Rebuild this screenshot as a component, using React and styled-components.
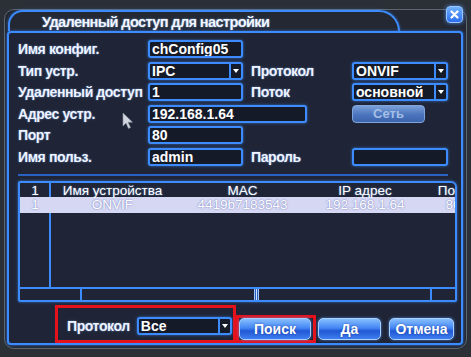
import React from "react";
import styled, { createGlobalStyle } from "styled-components";

const GlobalStyle = createGlobalStyle`
  html, body {
    margin: 0;
    padding: 0;
    background: #2b3036;
    font-family: "Liberation Sans", Arial, sans-serif;
  }
`;

const BLUE = "#3d8cff";

const Screen = styled.div`
  position: relative;
  width: 471px;
  height: 357px;
  overflow: hidden;
  padding: 9px 0 0 4px;
  box-sizing: border-box;
`;

const Window = styled.div`
  position: relative;
  width: 463px;
  box-sizing: border-box;
  border: 1px solid #5f6670;
  border-radius: 10px;
  padding: 0 3px 3px 2px;
  background: #232833;
`;

const TitleBar = styled.div`
  display: flex;
  height: 21px;
`;

const TitleTab = styled.div`
  width: 392px;
  margin-left: 1px;
  box-sizing: border-box;
  border: 2px solid ${BLUE};
  border-bottom: none;
  border-radius: 18px 26px 0 0;
  padding-left: 32px;
  display: flex;
  align-items: center;
  box-shadow: 0 0 3px rgba(60, 140, 255, 0.6);
`;

const Title = styled.span`
  color: #f2f6ff;
  font-size: 14.5px;
  letter-spacing: -0.6px;
  font-weight: bold;
  text-shadow: 0 0 2px rgba(140, 190, 255, 0.8);
`;

const CloseButton = styled.div`
  position: absolute;
  top: -4px;
  right: 3px;
  width: 17px;
  height: 17px;
  box-sizing: border-box;
  border-radius: 4px;
  border: 1px solid #9cc8ff;
  background: linear-gradient(#6fb0ff, #2a6ef0);
  box-shadow: 0 0 4px rgba(80, 150, 255, 0.9);
  display: flex;
  align-items: center;
  justify-content: center;
`;

const Panel = styled.div`
  box-sizing: border-box;
  border: 2px solid ${BLUE};
  border-radius: 4px;
  background: #1f2536;
  box-shadow: 0 0 3px rgba(50, 130, 255, 0.8);
  padding: 7px 0 0 9px;
`;

const Form = styled.div`
  display: grid;
  grid-template-columns: 130px 95px 109px 96px;
  grid-auto-rows: 18px;
  row-gap: 3.5px;
`;

const Label = styled.div`
  display: flex;
  align-items: center;
  padding-left: ${(p) => (p.$second ? "8px" : "0")};
  color: #eef3ff;
  font-size: 14px;
  letter-spacing: -0.4px;
  font-weight: bold;
  white-space: nowrap;
  text-shadow: 0 0 2px rgba(130, 180, 255, 0.7);
`;

const Input = styled.div`
  width: ${(p) => p.$w || "95px"};
  height: 18px;
  box-sizing: border-box;
  border: 2px solid ${BLUE};
  border-radius: 3px;
  background: #151a28;
  box-shadow: 0 0 3px rgba(60, 140, 255, 0.7);
  display: flex;
  align-items: center;
  color: #ffffff;
  font-size: 14px;
  font-weight: bold;
  padding-left: 2px;
  overflow: hidden;
  grid-column: ${(p) => p.$span || "auto"};
`;

const SelectBox = styled(Input)`
  padding-left: 0;
`;

const SelectText = styled.span`
  flex: 1;
  padding-left: 2px;
`;

const Arrow = styled.div`
  width: 10px;
  height: 100%;
  border-left: 2px solid ${BLUE};
  display: flex;
  align-items: center;
  justify-content: center;
  &::after {
    content: "";
    border-left: 3.5px solid transparent;
    border-right: 3.5px solid transparent;
    border-top: 4px solid #ffffff;
  }
`;

const NetButton = styled.div`
  width: 73px;
  box-sizing: border-box;
  border: 1px solid #7fa6dc;
  border-radius: 4px;
  background: linear-gradient(#7a9fd8, #4a74bd 55%, #3b64ad);
  display: flex;
  align-items: center;
  justify-content: center;
  color: #a4bfe6;
  font-size: 13px;
  font-weight: bold;
`;

const Separator = styled.div`
  width: 430px;
  height: 2px;
  margin-top: 8px;
  background: #2a62c4;
`;

const Table = styled.div`
  width: 439px;
  height: 121px;
  margin-top: 5px;
  box-sizing: border-box;
  border: 2px solid ${BLUE};
  border-radius: 2px 6px 2px 2px;
  box-shadow: 0 0 3px rgba(60, 140, 255, 0.7);
  display: flex;
  flex-direction: column;
  overflow: hidden;
`;

const List = styled.div`
  flex: 1;
  background: linear-gradient(
    to right,
    transparent 29px,
    ${BLUE} 29px,
    ${BLUE} 31px,
    transparent 31px
  );
`;

const TableRow = styled.div`
  display: grid;
  grid-template-columns: 30px 125px 135px 110px 66px;
  height: ${(p) => (p.$selected ? "16px" : "14px")};
  align-items: center;
  background: ${(p) => (p.$selected ? "#d6d8f3" : "transparent")};
  color: #ffffff;
  font-size: 13.5px;
  text-shadow: ${(p) =>
    p.$selected
      ? "0 0 1px #7d84c4, 0 0 2px #8a90cc"
      : "0 0 2px rgba(130, 180, 255, 0.7)"};
  white-space: nowrap;
`;

const Cell = styled.div`
  text-align: center;
`;

const ScrollRow = styled.div`
  height: 11px;
  border-top: 2px solid ${BLUE};
  display: flex;
`;

const ScrollEnd = styled.div`
  width: ${(p) => p.$w};
  box-sizing: border-box;
  ${(p) => (p.$right ? "border-left" : "border-right")}: 2px solid ${BLUE};
`;

const Track = styled.div`
  flex: 1;
  display: flex;
  justify-content: center;
`;

const Thumb = styled.div`
  width: 5px;
  background: linear-gradient(
    to right,
    #9fc6ff 0 1px,
    #2a5fc0 1px 2px,
    #cfe2ff 2px 3px,
    #2a5fc0 3px 4px,
    #9fc6ff 4px
  );
`;

const BottomBar = styled.div`
  display: flex;
  align-items: flex-end;
  height: 38px;
  margin-top: 3.5px;
  padding-left: 37px;
`;

const Marked = styled.div`
  box-sizing: border-box;
  border: 3px solid #e5121c;
  display: flex;
  align-items: flex-end;
  padding-right: ${(p) => p.$pr || "0"};
`;

const ProtoGroup = styled(Marked)`
  width: 181px;
  height: 38px;
  align-items: center;
  padding: 4px 0 0 9px;
  gap: 7px;
`;

const Button = styled.div`
  width: ${(p) => p.$w};
  height: 22px;
  box-sizing: border-box;
  margin: 0 0 ${(p) => (p.$free ? "3px" : "0")} ${(p) => p.$ml || "0"};
  border: 1px solid #a8d0ff;
  border-radius: 5px;
  background: linear-gradient(#86beff, #4486f4 45%, #2158d4 60%, #3f7ef0);
  box-shadow: 0 0 3px rgba(80, 150, 255, 0.8);
  display: flex;
  align-items: center;
  justify-content: center;
  color: #ffffff;
  font-size: 14px;
  font-weight: bold;
  text-shadow: 0 0 2px rgba(20, 50, 140, 0.8);
`;

const Cursor = styled.svg`
  position: absolute;
  left: 122px;
  top: 112px;
`;

export default function App() {
  return (
    <Screen>
      <GlobalStyle />
      <Window>
        <TitleBar>
          <TitleTab>
            <Title>Удаленный доступ для настройки</Title>
          </TitleTab>
        </TitleBar>
        <CloseButton>
          <svg width="9" height="9" viewBox="0 0 9 9">
            <path
              d="M1.5 1.5 L7.5 7.5 M7.5 1.5 L1.5 7.5"
              stroke="#fff"
              strokeWidth="2.2"
              strokeLinecap="round"
            />
          </svg>
        </CloseButton>
        <Panel>
          <Form>
            <Label>Имя конфиг.</Label>
            <Input>chConfig05</Input>
            <div />
            <div />

            <Label>Тип устр.</Label>
            <SelectBox>
              <SelectText>IPC</SelectText>
              <Arrow />
            </SelectBox>
            <Label $second>Протокол</Label>
            <SelectBox $w="96px">
              <SelectText>ONVIF</SelectText>
              <Arrow />
            </SelectBox>

            <Label>Удаленный доступ</Label>
            <Input>1</Input>
            <Label $second>Поток</Label>
            <SelectBox $w="96px">
              <SelectText>основной</SelectText>
              <Arrow />
            </SelectBox>

            <Label>Адрес устр.</Label>
            <Input $w="159px" $span="span 2">
              192.168.1.64
            </Input>
            <NetButton>Сеть</NetButton>

            <Label>Порт</Label>
            <Input>80</Input>
            <div />
            <div />

            <Label>Имя польз.</Label>
            <Input>admin</Input>
            <Label $second>Пароль</Label>
            <Input $w="96px" />
          </Form>

          <Separator />

          <Table>
            <List>
              <TableRow>
                <Cell>1</Cell>
                <Cell>Имя устройства</Cell>
                <Cell>MAC</Cell>
                <Cell>IP адрес</Cell>
                <Cell>Порт</Cell>
              </TableRow>
              <TableRow $selected>
                <Cell>1</Cell>
                <Cell>ONVIF</Cell>
                <Cell>4419b7183543</Cell>
                <Cell>192.168.1.64</Cell>
                <Cell>80</Cell>
              </TableRow>
            </List>
            <ScrollRow>
              <ScrollEnd $w="62px" />
              <Track>
                <Thumb />
              </Track>
              <ScrollEnd $w="25px" $right />
            </ScrollRow>
          </Table>

          <BottomBar>
            <ProtoGroup>
              <Label>Протокол</Label>
              <SelectBox>
                <SelectText>Все</SelectText>
                <Arrow />
              </SelectBox>
            </ProtoGroup>
            <Marked $pr="2px">
              <Button $w="72px">Поиск</Button>
            </Marked>
            <Button $w="63px" $ml="2px" $free>
              Да
            </Button>
            <Button $w="65px" $ml="8px" $free>
              Отмена
            </Button>
          </BottomBar>
        </Panel>
      </Window>
      <Cursor width="12" height="18" viewBox="0 0 12 18">
        <path
          d="M1 1 L1 14 L4 11 L6.5 16.5 L8.5 15.6 L6 10.2 L10.5 10.2 Z"
          fill="#e6e9f0"
          stroke="#9aa0ac"
          strokeWidth="0.6"
          opacity="0.9"
        />
      </Cursor>
    </Screen>
  );
}
